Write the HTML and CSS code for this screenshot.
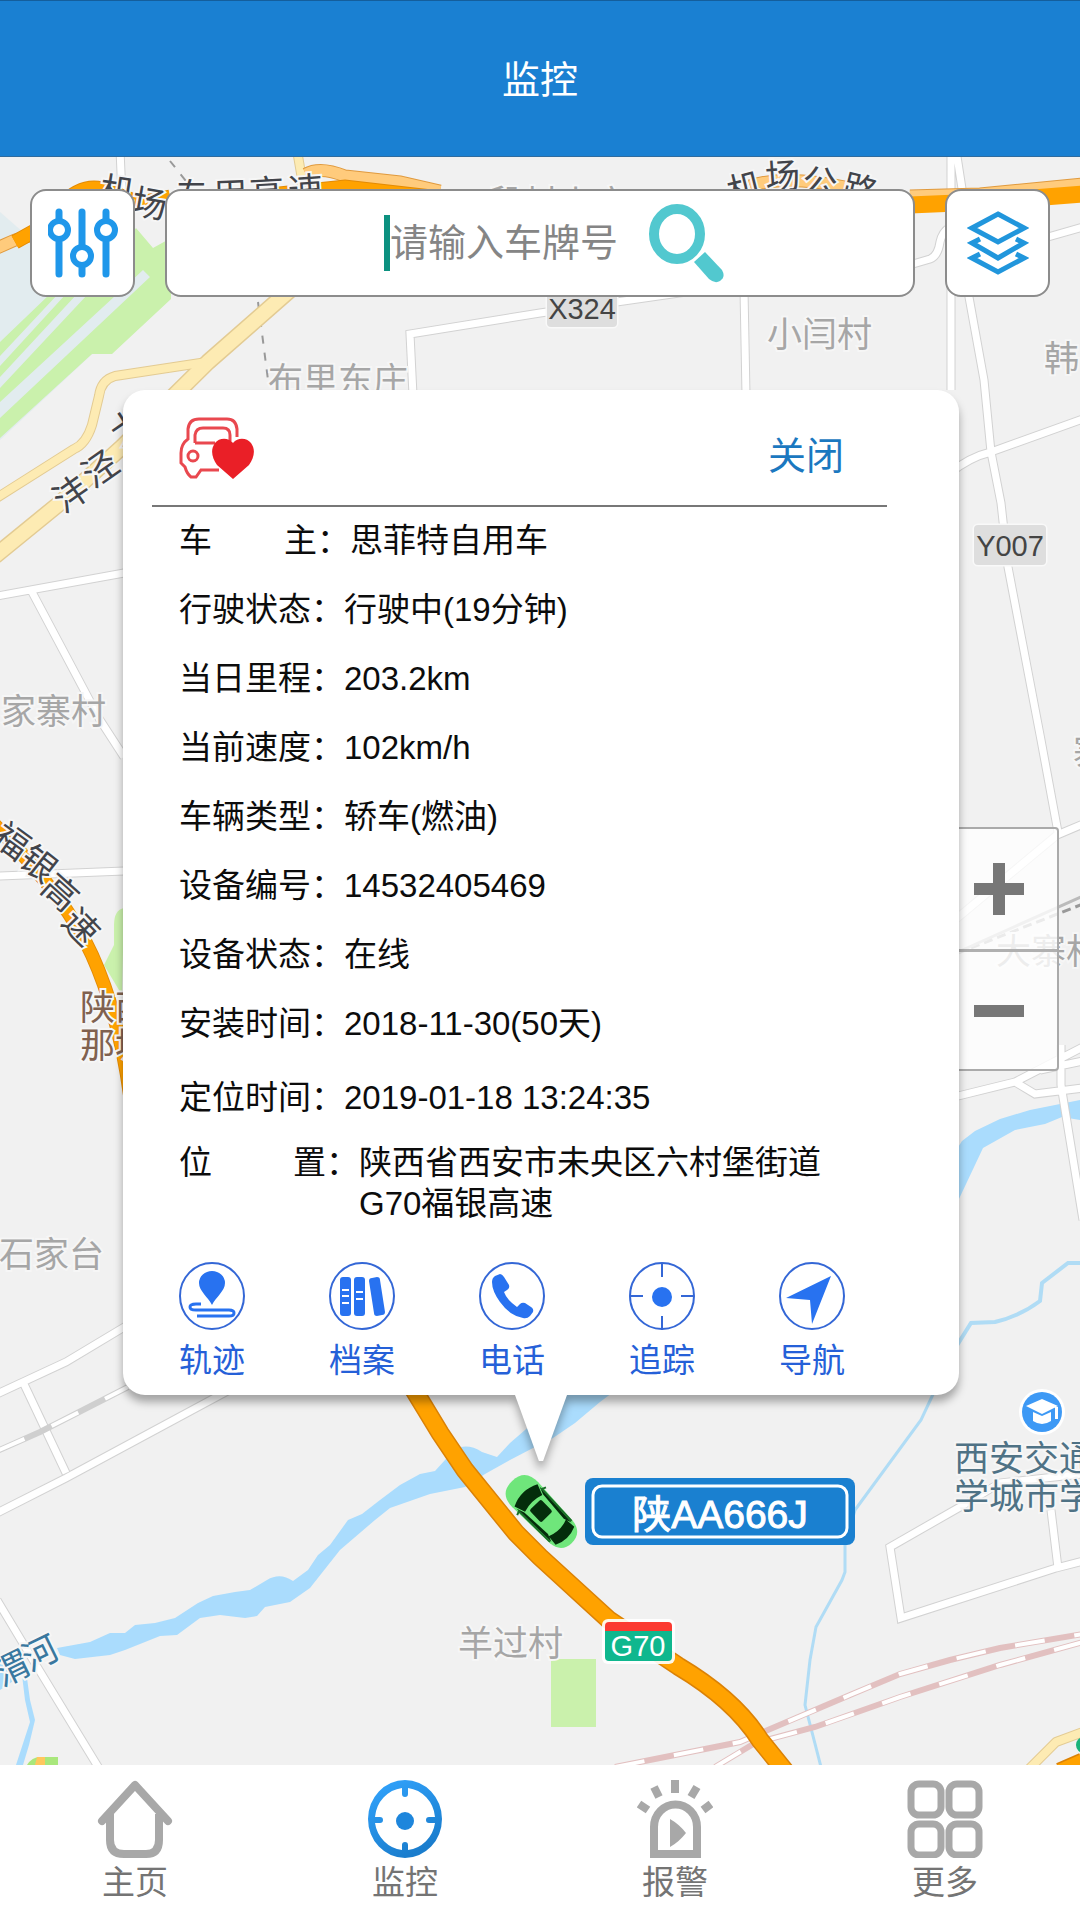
FILE: index.html
```html
<!DOCTYPE html>
<html lang="zh-CN">
<head>
<meta charset="utf-8">
<meta name="viewport" content="width=device-width, initial-scale=1">
<title>监控</title>
<link rel="stylesheet" href="styles.css">
</head>
<body>
<header class="topbar"><h1>监控</h1></header>

<main class="map">
  <svg class="map-canvas" viewBox="0 157 1080 1608" preserveAspectRatio="xMidYMid slice" role="img" aria-label="地图">
    <!-- land use -->
    <path fill="#e2ecef" d="M0 212L32 240L136 240L150 300L0 440Z"/>
    <path class="green" d="M0 342L50 294H58L0 356ZM0 366L66 294H77L0 377ZM0 388L88 294L136 228L153 248L171 238V299L112 354H92L0 438Z"/>
    <path fill="#e2ecef" d="M143 270L150 277L0 418V402L128 284Z"/>
    <path class="green" d="M124 908Q114 910 114 925V945L104 965L122 995ZM551 1659H596V1727H551Z"/>
    <path fill="#a9e77c" d="M27 1765Q32 1757 40 1757H58V1765Z"/>
    <path fill="#ffc75e" d="M37 1757H45V1765H35Z"/>
    <!-- water -->
    <path class="water" d="M57 1648L90 1642L110 1633H125L135 1625L155 1623L175 1618L198 1603L213 1596L235 1592L250 1590L267 1580Q280 1572 293 1581L308 1570L318 1555L330 1545L348 1520L362 1514L380 1500L400 1485L420 1474L435 1471L455 1449Q468 1443 482 1452L497 1457L510 1443L525 1430L570 1390H616L600 1402L575 1423L553 1438L533 1448L510 1460L485 1474L465 1487L430 1494L390 1508L375 1520L340 1550L310 1588L290 1602L265 1607L257 1616L245 1618L220 1615L200 1618L177 1635L160 1636L135 1646L125 1650L110 1655L75 1659L60 1655Z"/>
    <path class="water" d="M950 1160L962 1141L975 1131L1000 1119L1030 1110L1060 1104L1080 1100V1120L1062 1117L1045 1124L1015 1130L983 1148L950 1218ZM0 1664L24 1656L30 1700L35 1720L29 1745L23 1765H16L30 1722L25 1700L22 1675L0 1690Z"/>
    <path class="stream wide" d="M956 1347L971 1323L995 1322Q1020 1316 1040 1301L1042 1283L1068 1263H1082"/>
    <path class="stream" d="M935 1390L921 1420L855 1510L845 1545V1572L842 1580L816 1627L810 1660L805 1705L821 1767"/>
    <!-- minor roads -->
    <g class="road-edge">
      <path id="r1" d="M120 150L122 195M951 150V390M956 150L963 195L969 297L984 380L991 452L1001 503L1008 567L1041 740L1058 832M744 290L746 395M413 395L410 334L540 313L700 290M950 473Q970 457 991 452L1083 419M1048 237L1083 227M913 264L930 259Q938 256 940 242Q942 232 950 227M-3 596L124 573M32 592L100 720L124 757M-3 876L124 871"/>
      <path id="r2" d="M-3 1394L66 1362L126 1326M23 1382L66 1473M-3 1513L66 1478L235 1387M-3 1600L30 1655L100 1770M950 924L1057 835L1083 824M950 1098L1015 1082L1083 1047M1015 1082L1035 1094L1083 1088M1040 1070L1083 1061M1061 1045V1085L1083 1220M960 1507L890 1547L901 1618L1056 1568L1083 1561M1051 1510L1058 1568M960 1507L1000 1483L1083 1474"/>
    </g>
    <g class="road">
      <use href="#r1"/><use href="#r2"/>
    </g>
    <path fill="none" stroke="#999" stroke-width="2" stroke-dasharray="8 9" d="M170 161L186 181M258 302L268 380"/>
    <path fill="none" stroke="#999" stroke-width="3" stroke-dasharray="9 5" d="M958 953L1083 904"/>
    <path fill="none" stroke="#bbb" stroke-width="3" d="M958 952L1083 896"/>
    <!-- yellow roads -->
    <g fill="none" stroke="#e3cb93" stroke-linejoin="round">
      <path stroke-width="17" d="M290 290L208 362L122 447L60 503L-5 556"/>
      <path stroke-width="10" d="M207 362L115 376Q101 380 99 396L92 425Q86 444 74 449L-5 499M297 150L303 185M1028 1770L1056 1742L1083 1732"/>
    </g>
    <g fill="none" stroke="#fdebb3" stroke-linejoin="round">
      <path stroke-width="14" d="M290 290L208 362L122 447L60 503L-5 556"/>
      <path stroke-width="8" d="M207 362L115 376Q101 380 99 396L92 425Q86 444 74 449L-5 499M297 150L303 185M1028 1770L1056 1742L1083 1732"/>
    </g>
    <!-- railways -->
    <path class="rail gray" d="M-3 1451L40 1432L128 1387"/>
    <path class="rail-gap" d="M-3 1451L40 1432L128 1387"/>
    <path class="rail" d="M615 1767L740 1742L850 1695L900 1674L950 1660L1000 1648L1083 1634M715 1767L755 1743L815 1727L900 1697L1000 1665L1083 1642"/>
    <path class="rail-gap" d="M615 1767L740 1742L850 1695L900 1674L950 1660L1000 1648L1083 1634M715 1767L755 1743L815 1727L900 1697L1000 1665L1083 1642"/>
    <!-- highways -->
    <g fill="none">
      <path stroke="#e09a3e" stroke-width="13" d="M-3 248L15 240L32 235M306 174Q320 166 345 176L400 182L440 191M750 186Q785 174 850 188M910 196L980 194L1083 184"/>
      <path stroke="#ffcb7c" stroke-width="11" d="M-3 248L15 240L32 235M306 174Q320 166 345 176L400 182L440 191M750 186Q785 174 850 188M910 196L980 194L1083 184"/>
      <path stroke="#e38b05" stroke-width="15" d="M15 242L40 228M60 206Q85 180 110 192L140 203L170 197M270 195L345 187L440 198"/>
      <path stroke="#ffa200" stroke-width="13" d="M15 242L40 228M60 206Q85 180 110 192L140 203L170 197M270 195L345 187L440 198"/>
      <path stroke="#ffa200" stroke-width="17" d="M910 205L980 202L1083 194"/>
      <path stroke="#e38b05" stroke-width="14" d="M-10 820Q65 895 92 955T130 1095"/>
      <path stroke="#ffa200" stroke-width="12" d="M-10 820Q65 895 92 955T130 1095"/>
      <path stroke="#db8206" stroke-width="19" d="M414 1390L440 1433L465 1470L516 1533L540 1557L609 1620L678 1666Q735 1700 760 1740L785 1771M1060 1772L1083 1762"/>
      <path stroke="#ffa200" stroke-width="16" d="M414 1390L440 1433L465 1470L516 1533L540 1557L609 1620L678 1666Q735 1700 760 1740L785 1771M1060 1772L1083 1762"/>
    </g>
    <circle cx="1084" cy="1745" r="8" fill="#19b37b"/>
    <!-- place names -->
    <g class="place">
      <text x="268" y="393">布里东庄</text>
      <text x="488" y="216">段村小庄</text>
      <text x="767" y="347">小闫村</text>
      <text x="1044" y="371">韩</text>
      <text x="1" y="724">家寨村</text>
      <text x="-1" y="1267">石家台</text>
      <text x="458" y="1656">羊过村</text>
      <text x="996" y="964">大寨村</text>
      <text x="1073" y="765">寨</text>
    </g>
    <g class="place school"><text x="954" y="1471">西安交通</text><text x="954" y="1509">学城市学</text></g>
    <g class="place relic"><text x="80" y="1020">陕西</text><text x="80" y="1058">那坡</text></g>
    <text class="place river" x="2 30" y="1687 1672" rotate="-26">渭河</text>
    <g class="place street">
      <text x="98 130 174 213 250 289" y="201 213 209 208 206 204" rotate="9 10 0 -2 -3 -4">机场专用高速</text>
      <text x="731 766 801 840" y="205 190 193 198" rotate="-14 -4 7 14">机场公路</text>
      <text x="64 93 121" y="514 489 447" rotate="-35">沣泾大</text>
      <text x="-10 17 39 60" y="841 863 890 923" rotate="36 38 42 46">福银高速</text>
    </g>
    <!-- road shields -->
    <rect class="shield" x="547" y="291" width="70" height="36" rx="4"/><text class="shield-text" x="582" y="319">X324</text>
    <rect class="shield" x="974" y="525" width="72" height="40" rx="4"/><text class="shield-text" x="1010" y="556">Y007</text>
    <rect x="602" y="1619" width="73" height="45" rx="6" fill="#fff" fill-opacity=".9"/>
    <path fill="#fb3a31" d="M609 1622H668Q672 1622 672 1626V1632H605V1626Q605 1622 609 1622Z"/>
    <path fill="#0fb78e" d="M605 1631H672V1657Q672 1661 668 1661H609Q605 1661 605 1657Z"/>
    <text class="shield-text light" x="638" y="1656">G70</text>
    <!-- school marker -->
    <circle cx="1042" cy="1412" r="23" fill="#fff"/><circle cx="1042" cy="1412" r="20" fill="#3d99f5"/>
    <path fill="#fff" d="M1042 1399L1058 1406L1042 1414L1026 1406ZM1033 1412L1042 1416L1051 1412V1421Q1042 1427 1033 1421ZM1055 1407H1058V1419H1055Z"/>
    <!-- vehicle -->
    <g transform="translate(542 1512) rotate(46)">
      <path fill="#6fe67b" d="M-43 0C-43 -13 -36 -18 -24 -18L28 -16C38 -15 43 -9 43 0S38 15 28 16L-24 18C-36 18 -43 13 -43 0Z"/>
      <path fill="#042d0b" d="M-23 -16Q-31 0 -23 16L-12 12Q-16 0 -12 -12ZM-20 -16L28 -14L20 -11L-12 -13ZM-20 16L28 14L20 11L-12 13ZM22 -12L33 -13Q39 0 33 13L22 12Q27 0 22 -12Z"/>
      <rect x="-10" y="-8" width="17" height="16" rx="2" fill="#042d0b"/>
      <path stroke="#1a6d27" stroke-width="2" d="M-17 -15L-15 -20M-17 15L-15 20M-16 -16L27 -15M-16 16L27 15"/>
    </g>
    <rect x="585" y="1478" width="270" height="67" rx="8" fill="#1a80d0"/>
    <rect x="593" y="1486" width="254" height="51" rx="9" fill="none" stroke="#fff" stroke-width="3"/>
    <text class="plate" x="720" y="1528">陕AA666J</text>
  </svg>

  <div class="toolbar">
    <button class="tool" aria-label="筛选">
      <svg width="70" height="70" viewBox="0 0 70 70" fill="none" stroke="#1f97ea" stroke-width="7" stroke-linecap="round"><path d="M11 4V12M11 33V66M34 4V37M34 58V66M58 4V12M58 33V66"/><g stroke-width="6"><circle cx="11" cy="22" r="9"/><circle cx="34" cy="48" r="9"/><circle cx="58" cy="22" r="9"/></g></svg>
    </button>
    <form class="search">
      <input class="search-input" type="text" aria-label="车牌号" placeholder="请输入车牌号">
      <button class="search-go" type="button" aria-label="搜索">
        <svg width="76" height="80" viewBox="0 0 76 80"><ellipse cx="29" cy="31" rx="23" ry="25" fill="none" stroke="#52c8cf" stroke-width="10"/><path fill="#52c8cf" d="M57 49L74 67Q78 74 72 78Q67 81 61 76L46 59Z"/></svg>
      </button>
    </form>
    <button class="tool" aria-label="图层">
      <svg width="62" height="66" viewBox="0 0 62 66" fill="none" stroke="#2196dc" stroke-width="5"><path d="M31 4L57 18L31 32L5 18Z"/><path d="M13 29L5 33L31 48L57 33L49 29M13 44L5 48L31 62L57 48L49 44"/></svg>
    </button>
  </div>

  <div class="zoom">
    <button aria-label="放大"><svg width="50" height="52" viewBox="0 0 50 52" fill="#777"><path d="M19 0H31V20H50V32H31V52H19V32H0V20H19Z"/></svg></button>
    <button aria-label="缩小"><svg width="50" height="52" viewBox="0 0 50 52" fill="#777"><path d="M0 20H50V32H0Z"/></svg></button>
  </div>

  <section class="card">
    <div class="card-head">
      <svg width="76" height="70" viewBox="0 0 76 70" fill="none" stroke="#e9484f" stroke-width="3"><path d="M58 20V12Q57 2 48 2H20Q10 2 9 12V22Q2 27 2 36V46L6 50Q8 57 12 60H17L22 53H40M16 26V18Q17 11 24 11H44Q51 11 51 18V24M16 26H36"/><circle cx="14" cy="39" r="5"/><path fill="#ea1f27" stroke="none" d="M54 26C49 20 40 21 36 26C31 33 33 41 38 48L54 62L70 48C75 41 77 33 72 26C68 21 59 20 54 26Z"/></svg>
      <button class="close">关闭</button>
    </div>
    <dl class="info">
      <div><dt class="spread"><span>车</span><span>主：</span></dt><dd>思菲特自用车</dd></div>
      <div><dt>行驶状态：</dt><dd>行驶中(19分钟)</dd></div>
      <div><dt>当日里程：</dt><dd>203.2km</dd></div>
      <div><dt>当前速度：</dt><dd>102km/h</dd></div>
      <div><dt>车辆类型：</dt><dd>轿车(燃油)</dd></div>
      <div><dt>设备编号：</dt><dd>14532405469</dd></div>
      <div><dt>设备状态：</dt><dd>在线</dd></div>
      <div><dt>安装时间：</dt><dd>2018-11-30(50天)</dd></div>
      <div class="located"><dt>定位时间：</dt><dd>2019-01-18 13:24:35</dd></div>
      <div class="address"><dt class="spread"><span>位</span><span>置：</span></dt><dd>陕西省西安市未央区六村堡街道<br>G70福银高速</dd></div>
    </dl>
    <div class="actions">
      <button><svg viewBox="0 0 66 69"><ellipse cx="33" cy="34" rx="32" ry="33"/><path class="solid" d="M33 43C29 35 20 29 20 21A13 12 0 0 1 46 21C46 29 37 35 33 43Z"/><path class="thick" d="M22 42H17Q11 42 11 45T17 48H50Q55 48 55 51T50 54H18"/></svg>轨迹</button>
      <button><svg viewBox="0 0 66 69"><ellipse cx="33" cy="34" rx="32" ry="33"/><g class="solid"><rect x="11" y="15" width="11" height="39" rx="3"/><rect x="25" y="15" width="11" height="39" rx="3"/><path d="M43 16L48 15Q51 15 51 18L56 50Q56 53 53 53L48 54Q45 54 45 51L40 19Q40 16 43 16Z"/></g><path stroke="#fff" stroke-width="2" d="M13 28H20M13 34H20M13 41H20M27 30H34M27 37H34"/></svg>档案</button>
      <button><svg viewBox="0 0 66 69"><ellipse cx="33" cy="34" rx="32" ry="33"/><path class="solid" d="M16 14L21 12Q23 12 25 15L30 23Q31 26 28 28L25 30Q28 38 38 45L41 42Q43 40 46 41L52 45Q55 47 54 50L51 54Q48 57 44 56Q31 54 21 40Q13 29 13 20Q13 16 16 14Z"/></svg>电话</button>
      <button><svg viewBox="0 0 66 69"><ellipse cx="33" cy="34" rx="32" ry="33"/><circle class="solid" cx="33" cy="35" r="10"/><path d="M33 1V15M33 54V68M1 34H14M52 34H65"/></svg>追踪</button>
      <button><svg viewBox="0 0 66 69"><ellipse cx="33" cy="34" rx="32" ry="33"/><path class="solid" d="M52 14L33 62L31 38L7 36Z"/></svg>导航</button>
    </div>
  </section>
</main>

<nav class="tabs">
  <a href="#home"><svg viewBox="0 0 76 78" fill="none" stroke="#a8a8a8" stroke-width="8" stroke-linecap="round" stroke-linejoin="round"><path d="M5 41L38 5L71 41"/><path stroke-linecap="butt" d="M13 34V60Q13 74 27 74H49Q62 74 62 60V34"/></svg>主页</a>
  <a href="#monitor" aria-current="page"><svg viewBox="0 0 76 78"><defs><linearGradient id="blue" x1="0" y1="0" x2=".5" y2="1"><stop offset="0" stop-color="#33a5ff"/><stop offset="1" stop-color="#1a7dcd"/></linearGradient></defs><path fill="url(#blue)" fill-rule="evenodd" d="M38 0A37 39 0 0 1 38 78A37 39 0 0 1 38 0ZM35 8A31 32 0 0 0 8 37H13Q16 37 16 40T13 43H8A31 32 0 0 0 35 70V65Q35 62 38 62T41 65V70A31 32 0 0 0 68 43H62Q59 43 59 40T62 37H68A31 32 0 0 0 41 8V14Q41 17 38 17T35 14Z"/><circle cx="38" cy="41" r="9" fill="#1e86dc"/></svg>监控</a>
  <a href="#alarm"><svg viewBox="0 0 76 78" fill="none" stroke="#a8a8a8" stroke-width="8"><path d="M17 74V47A21 22 0 0 1 60 47V74Z"/><path fill="#a8a8a8" stroke="none" d="M33 39Q42 44 49 53Q42 62 33 67Z"/><path d="M38 0V13M17 7L22 17M60 7L54 17M2 24L11 30M74 24L66 30"/></svg>报警</a>
  <a href="#more"><svg viewBox="0 0 76 78" fill="none" stroke="#a8a8a8" stroke-width="7"><rect x="4" y="4" width="30" height="31" rx="8"/><rect x="42" y="4" width="30" height="31" rx="8"/><rect x="4" y="44" width="30" height="31" rx="8"/><rect x="42" y="44" width="30" height="31" rx="8"/></svg>更多</a>
</nav>
</body>
</html>
```
FILE: styles.css
```css
* { box-sizing: border-box; }

body {
  margin: 0;
  min-height: 100vh;
  display: flex;
  flex-direction: column;
  font-family: "Liberation Sans", "Noto Sans CJK SC", sans-serif;
  font-size: 33px;
  color: #0c0c0c;
  background: #fff;
}

button {
  font: inherit;
  padding: 0;
  border: 0;
  background: none;
  cursor: pointer;
}

svg { display: block; }

.topbar {
  height: 157px;
  padding-bottom: 4px;
  display: flex;
  align-items: center;
  justify-content: center;
  background: #1a80d2;
  border-top: 1px solid #145e9c;
  border-bottom: 1px solid #2f6c9f;
}
.topbar h1 {
  margin: 0;
  font-size: 38px;
  font-weight: 400;
  color: #fff;
}

/* Map */
.map {
  position: relative;
  flex: 1;
  padding: 32px 30px 0;
  background: #f1f1f1;
}
.map-canvas {
  position: absolute;
  inset: 0;
  width: 100%;
  height: 100%;
}
.green { fill: #caf1ac; }
.water { fill: #aadcfd; }
.stream { fill: none; stroke: #b0dcf5; stroke-width: 3; }
.stream.wide { stroke-width: 4; }
.road-edge { fill: none; stroke: #d2d2d2; stroke-width: 9; }
.road { fill: none; stroke: #fff; stroke-width: 7; }
.rail { fill: none; stroke: #e2c0c0; stroke-width: 6; }
.rail.gray { stroke: #cfcfcf; }
.rail-gap { fill: none; stroke: #fff; stroke-width: 4; stroke-dasharray: 30 30; }

.place {
  font-size: 35px;
  fill: #a6a6a6;
  stroke: #f6f6f6;
  stroke-width: 4px;
  paint-order: stroke;
}
.school { fill: #4f7285; }
.relic { fill: #80614f; }
.river { fill: #39789f; }
.street { fill: #42444a; }
.shield { fill: #dedede; stroke: #f9f9f9; stroke-width: 3px; paint-order: stroke; }
.shield-text { font-size: 29px; fill: #444; text-anchor: middle; }
.shield-text.light { fill: #fff; }
.plate {
  font-size: 39px;
  fill: #fff;
  stroke: #fff;
  stroke-width: 1px;
  text-anchor: middle;
}

/* Search row */
.toolbar {
  position: relative;
  display: flex;
  gap: 30px;
}
.tool,
.search {
  height: 108px;
  background: #fff;
  border: 2px solid #8c8c8c;
  border-radius: 16px;
  display: flex;
  align-items: center;
  justify-content: center;
}
.tool { width: 105px; }
.search {
  flex: 1;
  margin: 0;
  padding-left: 28px;
}
.search-input {
  width: 264px;
  height: 56px;
  padding: 0;
  border: 0;
  border-left: 6px solid #0c9180;
  background: none;
  font: inherit;
  font-size: 38px;
  outline: 0;
}
.search-input::placeholder { color: #858585; opacity: 1; }

/* Zoom buttons */
.zoom {
  position: absolute;
  top: 670px;
  right: 21px;
  width: 120px;
  border: 2px solid #aaa;
  border-radius: 4px;
  background: rgba(255, 255, 255, .8);
}
.zoom button {
  width: 100%;
  height: 120px;
  display: flex;
  align-items: center;
  justify-content: center;
}
.zoom button + button { border-top: 3px solid #b0b0b0; }

/* Vehicle callout */
.card {
  position: relative;
  margin: 93px 91px 370px 93px;
  padding: 21px 72px 14px 29px;
  background: #fff;
  border-radius: 22px;
  filter: drop-shadow(0 7px 4px rgba(0, 0, 0, .32));
}
.card::after {
  content: "";
  position: absolute;
  top: 100%;
  left: 50%;
  width: 52px;
  height: 66px;
  margin-left: -26px;
  background: #fff;
  clip-path: polygon(0 0, 100% 0, 54% 100%, 46% 100%);
}
.card-head {
  height: 96px;
  display: flex;
  align-items: center;
  justify-content: space-between;
  padding: 0 43px 12px 27px;
  border-bottom: 2px solid #777;
}
.close { font-size: 38px; color: #1b78c0; }

.info { margin: 0; padding-left: 27px; }
.info div { display: flex; height: 69px; line-height: 67px; white-space: nowrap; }
.info dt { width: 165px; }
.info dt.spread { width: 171px; display: flex; justify-content: space-between; }
.info dd { margin: 0; }
.info .located { height: 78px; line-height: 78px; }
.info .address { height: auto; padding-top: 5px; line-height: 41px; }
.info .address dt { width: 180px; }

.actions {
  display: flex;
  justify-content: space-between;
  margin: 38px 42px 0 27px;
}
.actions button {
  width: 66px;
  display: flex;
  flex-direction: column;
  align-items: center;
  gap: 10px;
  line-height: 40px;
  white-space: nowrap;
  color: #2560d8;
}
.actions svg {
  width: 66px;
  height: 69px;
  fill: none;
  stroke: #3467d6;
  stroke-width: 2;
}
.actions .solid { fill: #2872f0; stroke: none; }
.actions .thick { stroke: #2872f0; stroke-width: 3; }

/* Bottom tabs */
.tabs {
  height: 155px;
  display: flex;
  background: #fff;
}
.tabs a {
  flex: 1;
  padding-top: 15px;
  display: flex;
  flex-direction: column;
  align-items: center;
  gap: 5px;
  line-height: 40px;
  color: #747474;
  text-decoration: none;
}
.tabs svg { width: 76px; height: 78px; }
```
